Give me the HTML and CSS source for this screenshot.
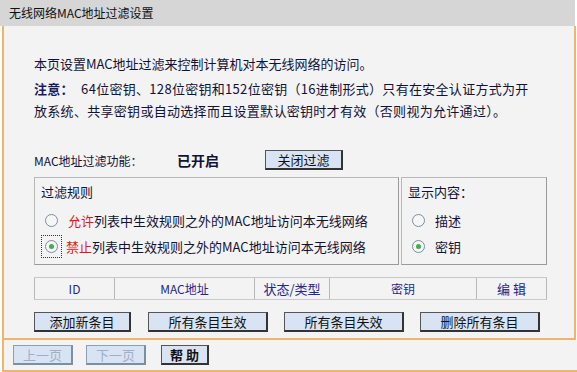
FILE: index.html
```html
<!DOCTYPE html>
<html>
  <head>
    <title>无线网络MAC地址过滤设置</title>
    <link rel="stylesheet" href="styles.css">
  </head>
  <body>
    <div class="title-bar">无线网络MAC地址过滤设置</div>

    <div class="panel">
      <p class="intro">本页设置MAC地址过滤来控制计算机对本无线网络的访问。</p>
      <p class="note"><b>注意：</b> 64位密钥、128位密钥和152位密钥（16进制形式）只有在安全认证方式为开<br>放系统、共享密钥或自动选择而且设置默认密钥时才有效（否则视为允许通过）。</p>

      <div class="status-row">
        <span class="status-label">MAC地址过滤功能：</span>
        <span class="status-value">已开启</span>
        <button class="btn btn-close">关闭过滤</button>
      </div>

      <div class="rule-row">
        <div class="box rules">
          <div class="box-title">过滤规则</div>
          <label class="radio-line"><span class="radio"></span><span><span class="red">允许</span>列表中生效规则之外的MAC地址访问本无线网络</span></label>
          <label class="radio-line"><span class="focus"><span class="radio checked"></span></span><span><span class="red">禁止</span>列表中生效规则之外的MAC地址访问本无线网络</span></label>
        </div>
        <div class="box show">
          <div class="box-title">显示内容：</div>
          <label class="radio-line"><span class="radio"></span><span>描述</span></label>
          <label class="radio-line"><span class="radio checked"></span><span>密钥</span></label>
        </div>
      </div>

      <div class="list-head">
        <div class="cell c-id">ID</div>
        <div class="cell c-mac">MAC地址</div>
        <div class="cell c-state">状态/类型</div>
        <div class="cell c-key">密钥</div>
        <div class="cell c-edit">编 辑</div>
      </div>

      <div class="action-row">
        <button class="btn btn-add">添加新条目</button>
        <button class="btn btn-all">所有条目生效</button>
        <button class="btn btn-all">所有条目失效</button>
        <button class="btn btn-all">删除所有条目</button>
      </div>
    </div>

    <div class="footer">
      <button class="btn btn-page disabled">上一页</button>
      <button class="btn btn-page disabled">下一页</button>
      <button class="btn btn-help">帮 助</button>
    </div>
  </body>
</html>
```

FILE: styles.css
```css
body {
  margin: 0;
  background-color: white;
  font-family: "Noto Sans CJK SC", "Liberation Sans", sans-serif;
  font-size: 13px;
  color: #121238;
}
.title-bar {
  width: 566px;
  height: 26px;
  line-height: 26px;
  padding-left: 9px;
  background-color: #d6d6d6;
  color: #111;
  font-size: 12px;
}
.panel {
  width: 540px;
  margin-left: 2px;
  padding: 26px 0 0 30px;
  background-color: #f3f3f3;
  border-left: 2px solid #f0b46a;
  border-right: 2px solid #f0b46a;
  border-bottom: 2px solid #f0b46a;
}
.intro {
  margin: 0;
  line-height: 24px;
}
.note {
  margin: 0;
  width: 540px;
  line-height: 22px;
  margin-top: 2px;
  letter-spacing: 0.3px;
}
.note b {
  color: #1a1a60;
  margin-right: 4px;
}
.status-row {
  display: flex;
  align-items: center;
  margin-top: 27px;
  height: 22px;
}
.status-label {
  width: 143px;
  font-size: 12px;
}
.status-value {
  width: 88px;
  font-weight: bold;
  font-size: 14px;
}
.btn {
  font-family: "Noto Sans CJK SC", "Liberation Sans", sans-serif;
  font-size: 13px;
  color: #111;
  background-color: #d8e4f4;
  border: 1px solid #555;
  border-right: 2px solid #333;
  border-bottom: 2px solid #333;
  height: 20px;
  padding: 0;
  line-height: 16px;
}
.btn-close {
  width: 78px;
}
.rule-row {
  display: flex;
  margin-top: 6px;
}
.box {
  border: 1px solid #b8b8b8;
  border-right-color: #9a9a9a;
  border-bottom-color: #9a9a9a;
  height: 83px;
  padding: 3px 0 0 6px;
}
.rules {
  width: 357px;
}
.show {
  width: 138px;
  margin-left: 2px;
}
.box-title {
  line-height: 22px;
  margin-bottom: 4px;
}
.radio-line {
  display: flex;
  align-items: center;
  height: 26px;
}
.radio {
  width: 11px;
  height: 11px;
  border: 1px solid #7c8ca0;
  border-radius: 50%;
  background-color: #f6f6f6;
  margin: 0 10px 0 4px;
  position: relative;
}
.radio.checked::after {
  content: "";
  position: absolute;
  left: 3px;
  top: 3px;
  width: 5px;
  height: 5px;
  border-radius: 50%;
  background-color: #3cb04c;
}
.focus {
  display: flex;
  align-items: center;
  height: 21px;
  margin-right: 4px;
  border: 1px dotted #333;
}
.focus .radio {
  margin: 0 3px;
}
.red {
  color: #e01818;
}
.list-head {
  display: flex;
  margin-top: 12px;
  width: 513px;
  height: 21px;
  border-top: 1px solid #c8c8c8;
  border-bottom: 1px solid #c8c8c8;
}
.cell {
  border-left: 1px solid #b8b8b8;
  text-align: center;
  line-height: 21px;
  color: #26268a;
  font-size: 12px;
  box-sizing: border-box;
}
.c-id {
  width: 80px;
}
.c-mac {
  width: 140px;
}
.c-state {
  width: 75px;
  font-size: 13px;
}
.c-key {
  width: 147px;
}
.c-edit {
  width: 71px;
  border-right: 1px solid #b8b8b8;
  font-size: 13px;
}
.action-row {
  display: flex;
  margin-top: 12px;
  padding-bottom: 6px;
}
.btn-add {
  width: 97px;
  margin-right: 17px;
}
.btn-all {
  width: 120px;
  margin-right: 16px;
}
.footer {
  width: 564px;
  margin-left: 2px;
  padding: 5px 0 5px 9px;
  background-color: #f3f3f3;
  border-left: 2px solid #f0b46a;
  border-right: 2px solid #f0b46a;
  border-bottom: 2px solid #f0b46a;
  display: flex;
  gap: 13px;
}
.btn-page {
  width: 60px;
}
.btn-page.disabled {
  color: #a0b0c4;
  border-color: #8ca0b4;
  border-right-color: #7a8ea4;
  border-bottom-color: #7a8ea4;
}
.btn-help {
  width: 48px;
  margin-left: 2px;
  font-weight: bold;
}
```
